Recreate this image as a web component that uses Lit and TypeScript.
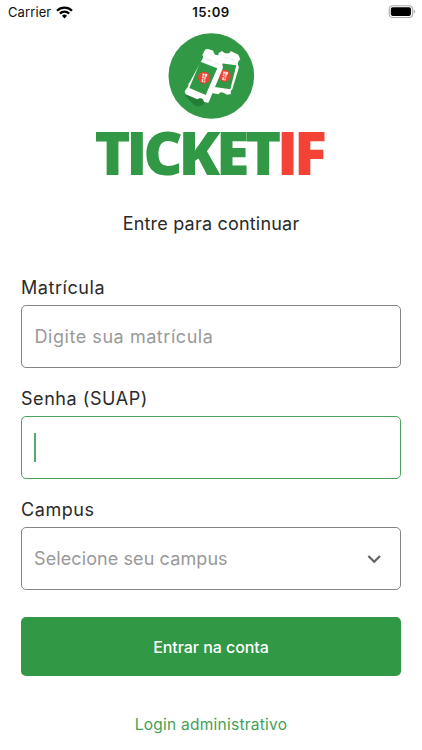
import { LitElement, html, css, svg } from "lit";
import { customElement, property } from "lit/decorators.js";
import { classMap } from "lit/directives/class-map.js";

@customElement("status-bar")
class StatusBar extends LitElement {
  static styles = css`
    :host { display: grid; grid-template-columns: 1fr auto 1fr; align-items: center; height: 24px; padding: 0 6px 0 8px; color: #111; font-size: 13px; }
    .carrier { display: flex; align-items: center; gap: 5px; letter-spacing: 0.1px; }
    .time { font-weight: 600; font-size: 13.2px; letter-spacing: 0.45px; transform: translateX(-1px); }
    .battery { justify-self: end; }
    svg { display: block; }
  `;
  render() {
    return html`
      <div class="carrier"><span>Carrier</span>
        <svg width="17" height="13" viewBox="0 0 17 13" fill="none" stroke="#000" stroke-width="2.3">
          <path d="M1 4.7a10.6 10.6 0 0 1 15 0M3.9 7.6a6.5 6.5 0 0 1 9.2 0" />
          <path d="M8.5 12.4l-2.5-2.6a3.6 3.6 0 0 1 5 0z" fill="#000" stroke="none" />
        </svg>
      </div>
      <div class="time">15:09</div>
      <svg class="battery" width="28" height="14" viewBox="0 0 28 14">
        <rect x="1.2" y="0.7" width="23.4" height="11.8" rx="3.4" fill="#fff" stroke="#a9a9a9" stroke-width="1.1" />
        <rect x="2.8" y="2.3" width="20.2" height="8.6" rx="1.8" fill="#000" />
        <path d="M25.9 4.5v4.2q1.2-.7 1.2-2.1t-1.2-2.1z" fill="#a9a9a9" />
      </svg>`;
  }
}

@customElement("brand-logo")
class BrandLogo extends LitElement {
  static styles = css`
    :host { display: flex; flex-direction: column; align-items: center; }
    svg { display: block; margin-right: 2px; }
    .name { margin-top: 2px; height: 52px; line-height: 52px; margin-right: 5px; font-family: "Open Sans", sans-serif; font-weight: 800; font-size: 61px; letter-spacing: -4.3px; color: #319845; white-space: nowrap; }
    .accent { color: #f44336; }
  `;
  private badge(x: number, y: number) {
    return svg`<g transform="translate(${x} ${y})">
      <circle r="18" fill="#f04136" />
      <g fill="#fde3dc" transform="rotate(6)">
        <circle cx="-3" cy="-9" r="3.4" /><path d="M1-12h8v6l-3 4H3L1-6z" />
        <rect x="-6" y="-4" width="5" height="6" /><rect x="0" y="-1" width="6" height="4" />
        <rect x="-6" y="5" width="4.5" height="9" /><rect x="0" y="5" width="5" height="3" /><rect x="0" y="10" width="5" height="4" />
      </g></g>`;
  }
  render() {
    return html`
      <svg width="100" height="96" viewBox="0 0 300 288">
        <circle cx="154" cy="144" r="128.5" fill="#319845" />
        <path d="M75 203l27 28q12 10 30-3l14-27-64-13z" fill="#247d36" />
        <path d="M176 75l10-6q6 9 20 7 5-2 6-7l23 11 6 14q-9 6-7 18l3 5-20 67-5 6 1 8-12 2-10-6-9-1-7 6-20-4z" fill="#fff" />
        <path d="M177 105l52 7-18 72-47-7z" fill="#319845" />
        ${this.badge(194, 143)}
        <path d="M135 66q4-5 11-2l14 4q1 12 10 13 6 2 10-3l14 6-5 16-2 10 2 9-41 99-3 6-13-2q-2-10-11-11-5-1-9 3l-35-15-3-9 11-16q-1-9 5-13l40-73-3-8z" fill="#fff" />
        <path d="M121 101l51 20-35 80-49-21z" fill="#319845" />
        <path d="M134 91l22 8M164 103l13 6M194 88l10 2M211 92l14 4" stroke="#e9eff5" stroke-width="4" />
        ${this.badge(132, 149)}
      </svg>
      <div class="name">TICKET<span class="accent">IF</span></div>`;
  }
}

@customElement("form-field")
class FormField extends LitElement {
  @property() label = "";
  @property() placeholder = "";
  @property({ type: Boolean }) active = false;
  @property({ type: Boolean }) select = false;
  static styles = css`
    :host { display: block; }
    .label { height: 24px; line-height: 25px; font-size: 18px; letter-spacing: 0.56px; color: #2a2a2a; }
    .box { box-sizing: border-box; display: flex; align-items: center; justify-content: space-between; height: 63px; margin-top: 6px; padding: 0 17px 0 12.5px; border: 1px solid #858585; border-radius: 5px; font-size: 18px; letter-spacing: 0.55px; color: #999; }
    .box.select { padding-left: 12px; letter-spacing: 0.1px; }
    .box.active { padding-left: 12px; border-color: #4ba35c; }
    .caret { width: 2px; height: 29px; background: #58aa69; }
    svg { display: block; }
  `;
  render() {
    return html`
      <div class="label">${this.label}</div>
      <div class=${classMap({ box: true, active: this.active, select: this.select })}>
        ${this.active ? html`<span class="caret"></span>` : html`<span>${this.placeholder}</span>`}
        ${this.select
          ? html`<svg width="18" height="18" viewBox="0 0 18 18" fill="none" stroke="#616161" stroke-width="2.2"><path d="M3.4 6L9.2 11.8 15 6" /></svg>`
          : ""}
      </div>`;
  }
}

@customElement("app-root")
class AppRoot extends LitElement {
  static styles = css`
    :host { display: block; box-sizing: border-box; width: 422px; height: 750px; overflow: hidden; background: #fff; font-family: Inter, sans-serif; color: #2a2a2a; }
    brand-logo { margin-top: 4px; }
    .intro { margin-top: 33px; height: 24px; line-height: 25px; text-align: center; font-size: 18px; letter-spacing: 0.2px; }
    .form { display: flex; flex-direction: column; gap: 18.4px; margin: 39.5px 21px 0; }
    .submit { display: block; width: 100%; height: 59px; margin-top: 8.6px; border: 0; border-radius: 5px; background: #319845; color: #fff; font: 500 16px Inter, sans-serif; letter-spacing: -0.05px; }
    .admin { margin-top: 35.5px; height: 24px; line-height: 25px; text-align: center; color: #44a156; font-size: 15.5px; letter-spacing: 0.25px; }
  `;
  render() {
    return html`
      <status-bar></status-bar>
      <brand-logo></brand-logo>
      <div class="intro">Entre para continuar</div>
      <div class="form">
        <form-field label="Matrícula" placeholder="Digite sua matrícula"></form-field>
        <form-field label="Senha (SUAP)" active></form-field>
        <form-field label="Campus" placeholder="Selecione seu campus" select></form-field>
        <button class="submit">Entrar na conta</button>
      </div>
      <div class="admin">Login administrativo</div>`;
  }
}
